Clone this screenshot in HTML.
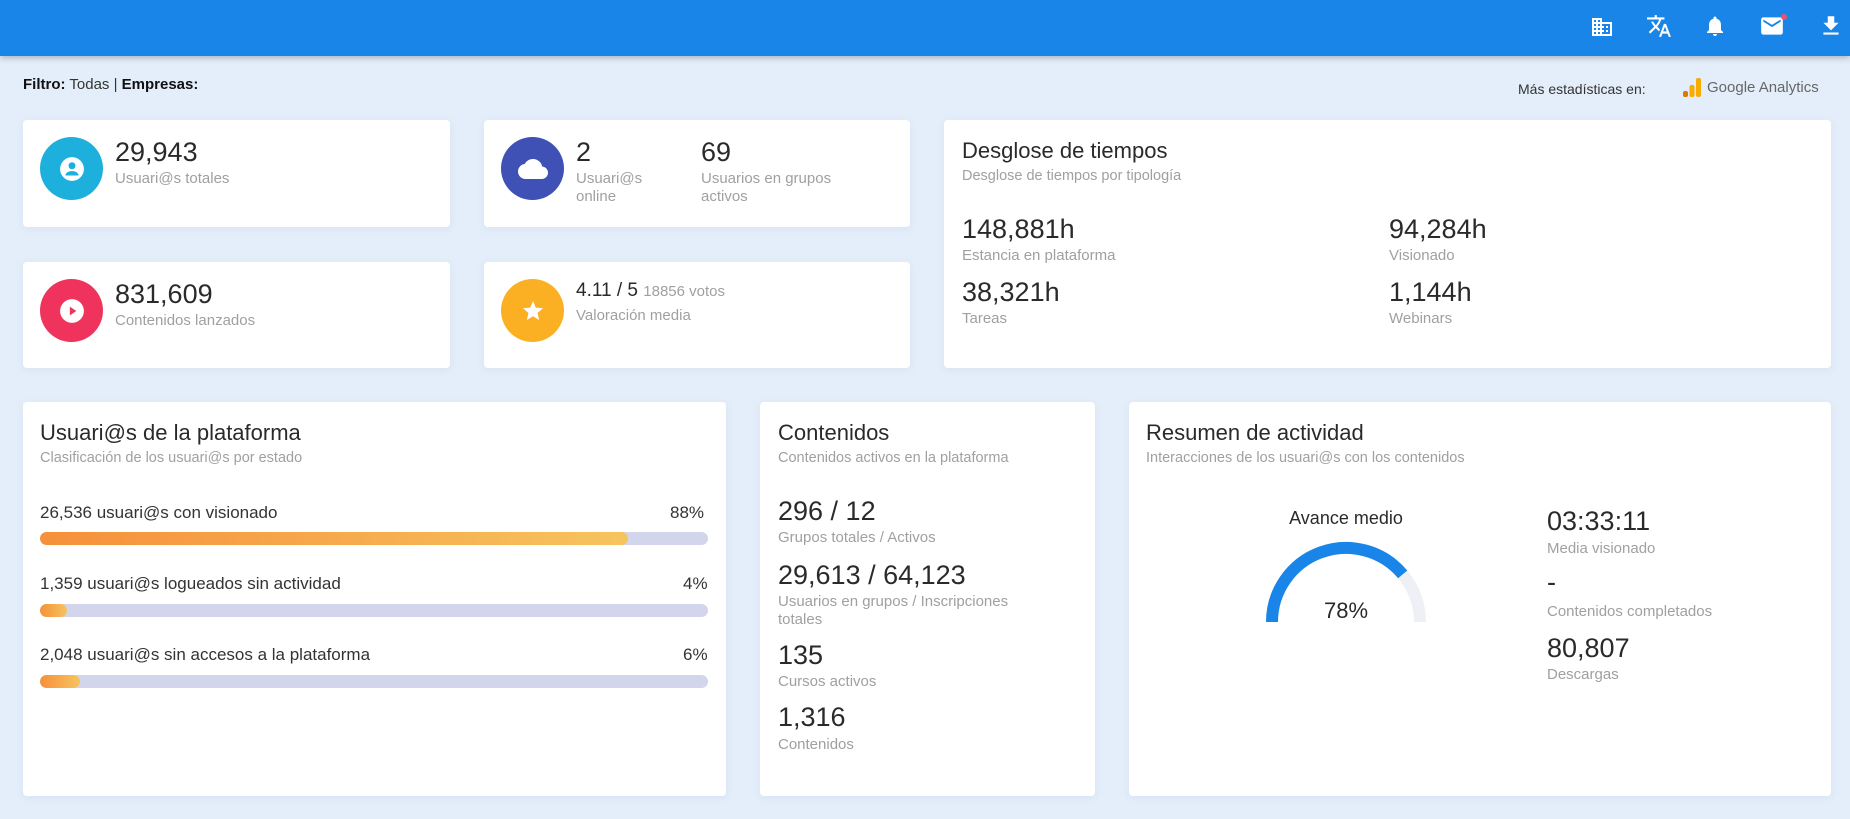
<!DOCTYPE html>
<html><head><meta charset="utf-8"><style>
*{box-sizing:border-box;margin:0;padding:0}
body{width:1850px;height:819px;background:#e4eefa;font-family:"Liberation Sans",sans-serif;color:#2a2a2a;position:relative;overflow:hidden}
.hdr{position:absolute;left:0;top:0;width:1850px;height:56px;background:#1a85e8;box-shadow:0 2px 6px rgba(0,0,0,.25)}
.card{position:absolute;background:#fff;border-radius:4px;box-shadow:0 2px 8px rgba(120,150,190,.12)}
.ab{position:absolute;white-space:nowrap}
.circ{position:absolute;width:63px;height:63px;border-radius:50%;display:flex;align-items:center;justify-content:center}
.big{font-size:27px;color:#2a2a2a}
.lbl{font-size:15px;color:#a0a0a0}
.ttl{font-size:22px;color:#2a2a2a}
.sub{font-size:14.5px;color:#a0a0a0}
.row{font-size:17px;color:#333}
.bar{position:absolute;left:40px;width:668px;height:13px;border-radius:7px;background:#d2d5ec;overflow:hidden}
.bar div{height:100%;border-radius:7px;background:linear-gradient(90deg,#f6903a,#f6c45e)}
</style></head><body>
<div class="hdr">
<svg class="ab" style="left:1590px;top:15px" width="24" height="24" viewBox="0 0 24 24" fill="#fff"><path d="M12 7V3H2v18h20V7H12zM6 19H4v-2h2v2zm0-4H4v-2h2v2zm0-4H4V9h2v2zm0-4H4V5h2v2zm4 12H8v-2h2v2zm0-4H8v-2h2v2zm0-4H8V9h2v2zm0-4H8V5h2v2zm10 12h-8v-2h2v-2h-2v-2h2v-2h-2V9h8v10zm-2-8h-2v2h2v-2zm0 4h-2v2h2v-2z"/></svg>
<svg class="ab" style="left:1646px;top:13px" width="26" height="26" viewBox="0 0 24 24" fill="#fff"><path d="M12.87 15.07l-2.54-2.51.03-.03A17.520 17.52 0 0014.07 6H17V4h-7V2H8v2H1v2h11.17C11.5 7.92 10.44 9.75 9 11.35 8.07 10.32 7.3 9.19 6.69 8h-2c.73 1.63 1.73 3.17 2.98 4.56l-5.09 5.02L4 19l5-5 3.11 3.11.76-2.040zM18.5 10h-2L12 22h2l1.12-3h4.75L21 22h2l-4.5-12zm-2.62 7l1.62-4.33L19.12 17h-3.24z"/></svg>
<svg class="ab" style="left:1703px;top:13px" width="24" height="26" viewBox="0 0 24 24" fill="#fff"><path d="M12 22c1.1 0 2-.9 2-2h-4c0 1.1.9 2 2 2zm6-6v-5c0-3.07-1.63-5.64-4.5-6.32V4c0-.83-.67-1.5-1.5-1.5s-1.5.67-1.5 1.5v.68C7.64 5.36 6 7.92 6 11v5l-2 2v1h16v-1l-2-2z"/></svg>
<svg class="ab" style="left:1759px;top:13px" width="26" height="26" viewBox="0 0 24 24" fill="#fff"><path d="M20 4H4c-1.1 0-2 .9-2 2v12c0 1.1.9 2 2 2h16c1.1 0 2-.9 2-2V6c0-1.1-.9-2-2-2zm0 4l-8 5-8-5V6l8 5 8-5v2z"/></svg>
<div class="ab" style="left:1781px;top:14px;width:6px;height:6px;border-radius:50%;background:#f0506e"></div>
<svg class="ab" style="left:1818px;top:13px" width="26" height="26" viewBox="0 0 24 24" fill="#fff"><path d="M19 9h-4V3H9v6H5l7 7 7-7zM5 18v2h14v-2H5z"/></svg>
</div>
<div class="ab" style="left:23px;top:76px;font-size:15px;color:#333"><b style="color:#111">Filtro:</b> Todas | <b style="color:#111">Empresas:</b></div>
<div class="ab" style="left:1518px;top:81px;font-size:14px;color:#333">Más estadísticas en:</div>
<svg class="ab" style="left:1683px;top:77px" width="18" height="22"><rect x="0" y="14" width="5" height="6" rx="2" fill="#e37400"/><rect x="6.5" y="8" width="5" height="12" rx="2" fill="#f9ab00"/><rect x="13" y="1" width="5" height="19" rx="2" fill="#f9ab00"/></svg>
<div class="ab" style="left:1707px;top:79px;font-size:15px;color:#666">Google Analytics</div>

<div class="card" style="left:23px;top:120px;width:427px;height:107px">
<div class="circ" style="left:17px;top:17px;background:#1eb0dc"><svg width="26" height="26" viewBox="0 0 24 24" fill="#fff"><circle cx="12" cy="12" r="11"/><circle cx="12" cy="9" r="3.2" fill="#1eb0dc"/><path d="M6 17c1.5-2.5 3.5-3 6-3s4.5.5 6 3v1H6z" fill="#1eb0dc"/></svg></div>
<div class="ab big" style="left:92px;top:17px">29,943</div>
<div class="ab lbl" style="left:92px;top:50px">Usuari@s totales</div></div>
<div class="card" style="left:23px;top:262px;width:427px;height:106px">
<div class="circ" style="left:17px;top:17px;background:#f0335c"><svg width="26" height="26" viewBox="0 0 24 24"><circle cx="12" cy="12" r="11" fill="#fff"/><path d="M10 8l6 4-6 4z" fill="#f0335c"/></svg></div>
<div class="ab big" style="left:92px;top:17px">831,609</div>
<div class="ab lbl" style="left:92px;top:50px">Contenidos lanzados</div></div>

<div class="card" style="left:484px;top:120px;width:426px;height:107px">
<div class="circ" style="left:17px;top:17px;background:#3f51b5"><svg width="30" height="30" viewBox="0 0 24 24" fill="#fff"><path d="M19.35 10.04A7.49 7.49 0 0012 4C9.11 4 6.6 5.64 5.35 8.04A5.994 5.994 0 000 14c0 3.31 2.69 6 6 6h13c2.76 0 5-2.24 5-5 0-2.64-2.05-4.78-4.65-4.96z"/></svg></div>
<div class="ab big" style="left:92px;top:17px">2</div>
<div class="ab lbl" style="left:92px;top:50px;line-height:18px">Usuari@s<br>online</div>
<div class="ab big" style="left:217px;top:17px">69</div>
<div class="ab lbl" style="left:217px;top:50px;line-height:18px">Usuarios en grupos<br>activos</div></div>
<div class="card" style="left:484px;top:262px;width:426px;height:106px">
<div class="circ" style="left:17px;top:17px;background:#fbb024"><svg width="24" height="24" viewBox="0 0 24 24" fill="#fff"><path d="M12 17.27L18.18 21l-1.64-7.03L22 9.24l-7.19-.61L12 2 9.19 8.63 2 9.24l5.46 4.73L5.82 21z"/></svg></div>
<div class="ab" style="left:92px;top:18px;font-size:19px">4.11 / 5 <span style="font-size:15px;color:#a0a0a0">18856 votos</span></div>
<div class="ab lbl" style="left:92px;top:45px">Valoración media</div></div>

<div class="card" style="left:944px;top:120px;width:887px;height:248px">
<div class="ab ttl" style="left:18px;top:18px">Desglose de tiempos</div>
<div class="ab sub" style="left:18px;top:48px">Desglose de tiempos por tipología</div>
<div class="ab big" style="left:18px;top:94px">148,881h</div><div class="ab lbl" style="left:18px;top:127px">Estancia en plataforma</div>
<div class="ab big" style="left:445px;top:94px">94,284h</div><div class="ab lbl" style="left:445px;top:127px">Visionado</div>
<div class="ab big" style="left:18px;top:157px">38,321h</div><div class="ab lbl" style="left:18px;top:190px">Tareas</div>
<div class="ab big" style="left:445px;top:157px">1,144h</div><div class="ab lbl" style="left:445px;top:190px">Webinars</div></div>

<div class="card" style="left:23px;top:402px;width:703px;height:394px">
<div class="ab ttl" style="left:17px;top:18px">Usuari@s de la plataforma</div>
<div class="ab sub" style="left:17px;top:48px">Clasificación de los usuari@s por estado</div></div>
<div class="ab row" style="left:40px;top:503px"><b style="font-weight:500">26,536</b> usuari@s con visionado</div><div class="ab row" style="left:670px;top:503px">88%</div>
<div class="bar" style="top:532px"><div style="width:88%"></div></div>
<div class="ab row" style="left:40px;top:574px">1,359 usuari@s logueados sin actividad</div><div class="ab row" style="left:683px;top:574px">4%</div>
<div class="bar" style="top:604px"><div style="width:4%"></div></div>
<div class="ab row" style="left:40px;top:645px">2,048 usuari@s sin accesos a la plataforma</div><div class="ab row" style="left:683px;top:645px">6%</div>
<div class="bar" style="top:675px"><div style="width:6%"></div></div>

<div class="card" style="left:760px;top:402px;width:335px;height:394px">
<div class="ab ttl" style="left:18px;top:18px">Contenidos</div>
<div class="ab sub" style="left:18px;top:48px">Contenidos activos en la plataforma</div>
<div class="ab big" style="left:18px;top:94px">296 / 12</div><div class="ab lbl" style="left:18px;top:127px">Grupos totales / Activos</div>
<div class="ab big" style="left:18px;top:158px">29,613 / 64,123</div><div class="ab lbl" style="left:18px;top:191px;line-height:18px">Usuarios en grupos / Inscripciones<br>totales</div>
<div class="ab big" style="left:18px;top:238px">135</div><div class="ab lbl" style="left:18px;top:271px">Cursos activos</div>
<div class="ab big" style="left:18px;top:300px">1,316</div><div class="ab lbl" style="left:18px;top:334px">Contenidos</div></div>

<div class="card" style="left:1129px;top:402px;width:702px;height:394px">
<div class="ab ttl" style="left:17px;top:18px">Resumen de actividad</div>
<div class="ab sub" style="left:17px;top:48px">Interacciones de los usuari@s con los contenidos</div>
<div class="ab" style="left:147px;top:106px;font-size:18px;width:140px;text-align:center">Avance medio</div>
<svg class="ab" style="left:137px;top:135px" width="160" height="90"><path d="M6 85 A74 74 0 0 1 154 85" fill="none" stroke="#eef0f5" stroke-width="12"/><path d="M6 85 A74 74 0 0 1 136.7 37.4" fill="none" stroke="#1a85e8" stroke-width="12"/></svg>
<div class="ab" style="left:177px;top:196px;font-size:22px;width:80px;text-align:center">78%</div>
<div class="ab big" style="left:418px;top:104px">03:33:11</div><div class="ab lbl" style="left:418px;top:138px">Media visionado</div>
<div class="ab big" style="left:418px;top:165px">-</div><div class="ab lbl" style="left:418px;top:201px">Contenidos completados</div>
<div class="ab big" style="left:418px;top:231px">80,807</div><div class="ab lbl" style="left:418px;top:264px">Descargas</div></div>
</body></html>
